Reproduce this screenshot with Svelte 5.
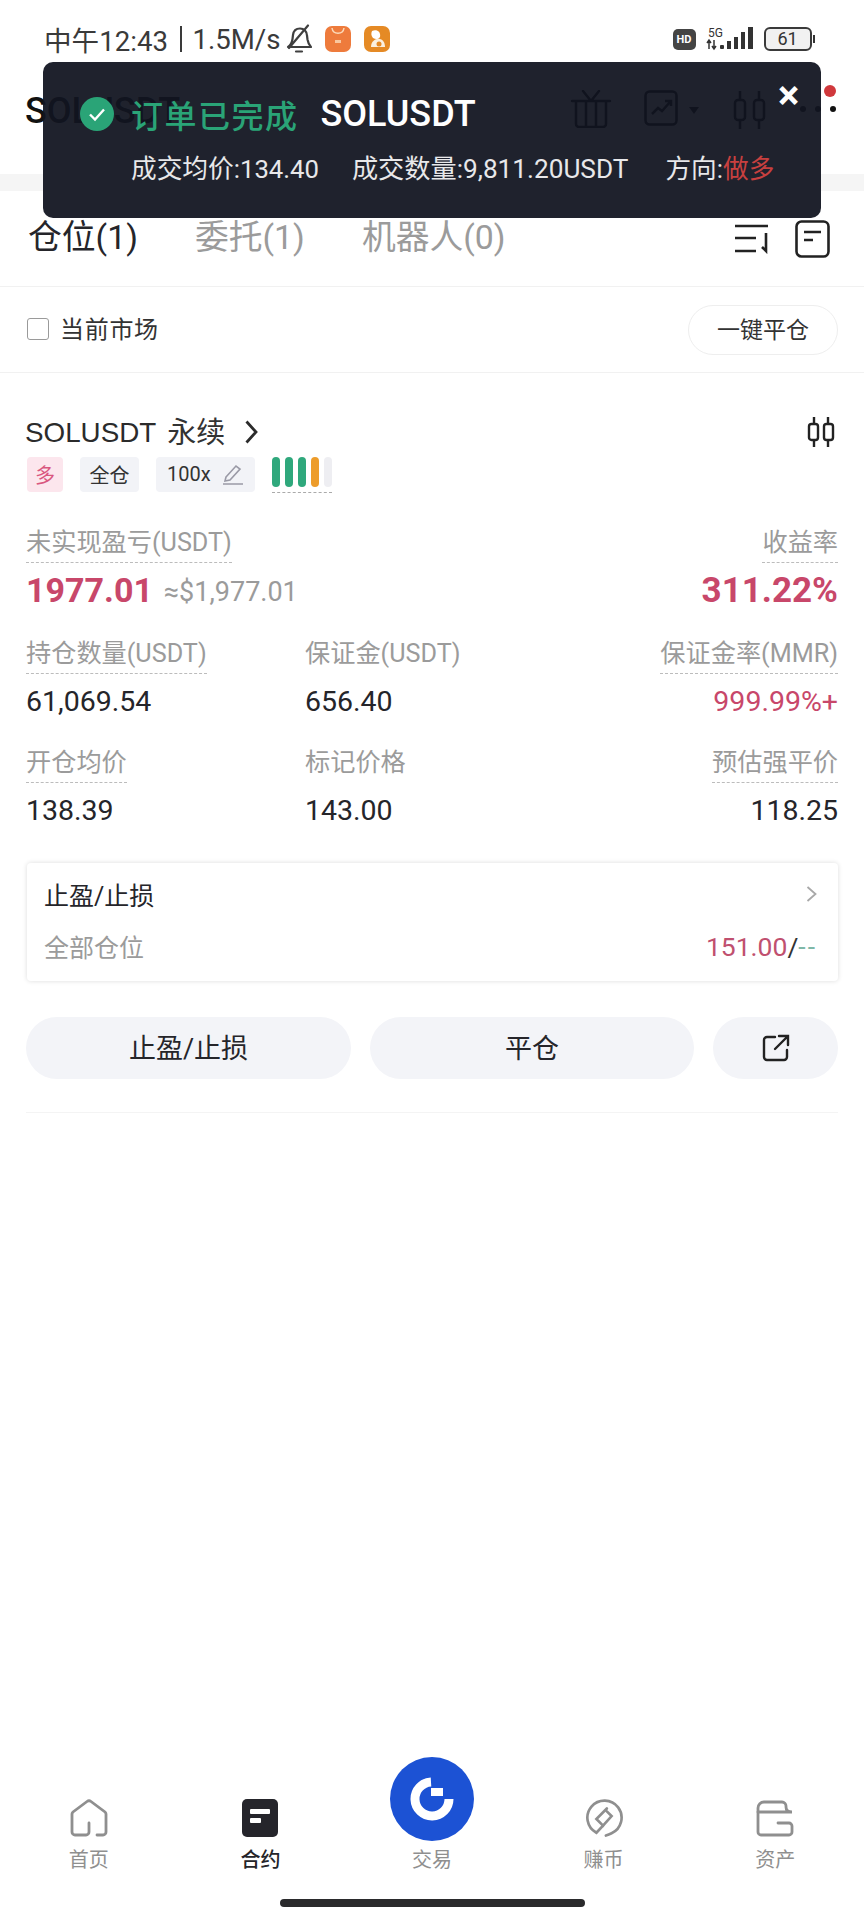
<script>
  const rows = [
    [
      { label: '持仓数量(USDT)', value: '61,069.54' },
      { label: '保证金(USDT)', value: '656.40', plain: true },
      { label: '保证金率(MMR)', value: '999.99%+', red: true }
    ],
    [
      { label: '开仓均价', value: '138.39' },
      { label: '标记价格', value: '143.00', plain: true },
      { label: '预估强平价', value: '118.25' }
    ]
  ];
  const bars = ['g', 'g', 'g', 'o', 'e'];
</script>

<div class="page">
  <div class="status">
    <span class="st-text">中午12:43</span>
    <span class="st-sep"></span>
    <span class="st-text">1.5M/s</span>
    <svg class="bell" viewBox="0 0 26 30" fill="none" stroke="#3f3f3f" stroke-width="2.200" stroke-linecap="round" stroke-linejoin="round">
      <path d="M2 23c3-2 4-4 4.500-8l.5-4c.5-4 3-6.500 7-6.500s7 3 7 7l.5 4c.5 3 1.500 5.500 3.500 7.500z" />
      <path d="M10 27.500h6M3 24L22 1.500" />
    </svg>
    <svg class="app" viewBox="0 0 26 26">
      <rect width="26" height="26" rx="7" fill="#ee7b3c" />
      <path d="M7 2c1 7 11 7 12 0" fill="none" stroke="#fbd9b8" stroke-width="1.500" />
      <rect x="10" y="14" width="6" height="3" fill="#f9c7a0" />
    </svg>
    <svg class="app" viewBox="0 0 26 26">
      <rect width="26" height="26" rx="7" fill="#e58a25" />
      <path d="M8 5c5-2 9 1 8 6-1 2-4 3-7 1-2-2-2-5-1-7z" fill="#fff" />
      <path d="M7 21c0-6 5-9 9-8s5 5 5 8z" fill="#fbf0df" />
      <circle cx="15" cy="18" r="2.500" fill="#e58a25" />
    </svg>
    <span class="st-right">
      <span class="hd">HD</span>
      <svg class="signal" viewBox="0 0 48 26">
        <text x="2" y="11" class="five">5G</text>
        <path d="M3 14v9M1 17l2-3 2 3M8 14v9M6 20l2 3 2-3" stroke="#333" stroke-width="1.500" fill="none" />
        <rect x="14" y="19" width="4" height="4" rx="1" fill="#333" />
        <rect x="21" y="15" width="4" height="8" fill="#333" />
        <rect x="28" y="11" width="4" height="12" fill="#333" />
        <rect x="35" y="6" width="4" height="17" fill="#333" />
        <rect x="42" y="1" width="5" height="22" fill="#333" />
      </svg>
      <span class="battery"><span class="batt-body">61</span><span class="batt-cap"></span></span>
    </span>
  </div>

  <header class="head">
    <span class="pair">SOLUSDT</span>
    <svg class="gift" viewBox="0 0 42 38" fill="none" stroke="#000" stroke-width="2.500" stroke-linecap="round">
      <path d="M2 11h38M6 11v23a3 3 0 0 0 3 3h24a3 3 0 0 0 3-3V11M16 11v26M26 11v26M13 1l8 10M29 1l-8 10" />
    </svg>
    <svg class="chart" viewBox="0 0 34 36" fill="none" stroke="#000" stroke-width="2.500">
      <rect x="1.500" y="1.500" width="31" height="33" rx="4" />
      <path d="M8 24l6-6 4 3 8-9M21 11h6v5" />
    </svg>
    <span class="caret"></span>
    <svg class="candles big" viewBox="0 0 33 38" fill="none" stroke="#000" stroke-width="2.500">
      <path d="M7 0v9M7 29v9M26 0v9M26 29v9" />
      <rect x="2" y="9" width="10" height="20" rx="3" />
      <rect x="21" y="9" width="10" height="20" rx="3" />
    </svg>
    <span class="more"><i></i><i></i><i></i></span>
    <span class="red-dot"></span>
  </header>
  <div class="band"></div>

  <nav class="tabs">
    <span class="tab on">仓位(1)</span>
    <span class="tab">委托(1)</span>
    <span class="tab">机器人(0)</span>
    <svg class="sort" viewBox="0 0 36 30" fill="none" stroke="#222" stroke-width="2.600">
      <path d="M0 2h33M0 14h21M0 27h21M31 9v18l-4-4" />
    </svg>
    <svg class="doc" viewBox="0 0 35 38" fill="none" stroke="#222" stroke-width="2.600">
      <rect x="1.500" y="1.500" width="32" height="35" rx="5" />
      <path d="M9 12h17M9 20h9" />
    </svg>
  </nav>

  <div class="filter">
    <span class="check"></span>
    <span class="filter-label">当前市场</span>
    <button class="close-all">一键平仓</button>
  </div>

  <section class="position">
    <div class="title">
      <span class="symbol">SOLUSDT</span>
      <span class="perp">永续</span>
      <svg class="chev" viewBox="0 0 13 24" fill="none" stroke="#2b2b2b" stroke-width="2.800">
        <path d="M1.500 1.500L11 12 1.500 22.500" />
      </svg>
      <svg class="candles" viewBox="0 0 28 30" fill="none" stroke="#222" stroke-width="2.400">
        <path d="M7 0v7M7 23v7M21 0v7M21 23v7" />
        <rect x="2" y="7" width="9" height="16" rx="2.500" />
        <rect x="17" y="7" width="9" height="16" rx="2.500" />
      </svg>
    </div>

    <div class="tags">
      <span class="tag long">多</span>
      <span class="tag">全仓</span>
      <span class="tag lev">100x
        <svg class="pen" viewBox="0 0 22 22" fill="none" stroke="#9a9aa6" stroke-width="1.600">
          <path d="M4 14L14 3l4 3-10 11-5 1zM1 21h20" />
        </svg>
      </span>
      <span class="bars">
        {#each bars as b}<i class={b}></i>{/each}
      </span>
    </div>

    <div class="pnl-labels">
      <span class="lbl">未实现盈亏(USDT)</span>
      <span class="lbl">收益率</span>
    </div>
    <div class="pnl-values">
      <span class="pnl first">1977.01</span>
      <span class="approx">≈$1,977.01</span>
      <span class="pnl rate">311.22%</span>
    </div>

    {#each rows as row}
      <div class="grid">
        {#each row as cell, i}
          <div class="cell" class:end={i === 2}>
            {#if cell.plain}
              <span class="lbl nodash">{cell.label}</span>
            {:else}
              <span class="lbl">{cell.label}</span>
            {/if}
            <span class="val" class:red={cell.red}>{cell.value}</span>
          </div>
        {/each}
      </div>
    {/each}

    <div class="tp">
      <div class="tp-top">
        <span>止盈/止损</span>
        <svg class="tp-chev" viewBox="0 0 11 16" fill="none" stroke="#a8a8a8" stroke-width="1.800">
          <path d="M1.500 1l8 7-8 7" />
        </svg>
      </div>
      <div class="tp-bottom">
        <span class="tp-all">全部仓位</span>
        <span class="tp-val"><em>151.00</em>/<b>--</b></span>
      </div>
    </div>

    <div class="actions">
      <button class="act">止盈/止损</button>
      <button class="act">平仓</button>
      <button class="act share" aria-label="分享">
        <svg viewBox="0 0 28 28" fill="none" stroke="#222" stroke-width="2.400" stroke-linecap="round">
          <path d="M13 3H5a3 3 0 0 0-3 3v17a3 3 0 0 0 3 3h17a3 3 0 0 0 3-3v-7M13 15L26 2M17 2h9v9" />
        </svg>
      </button>
    </div>
    <div class="faint"></div>
  </section>

  <footer class="nav">
    <div class="nav-item">
      <svg class="nav-icon" viewBox="0 0 38 38" fill="none" stroke="#8f8f8f" stroke-width="2.800" stroke-linecap="round">
        <path d="M27 36h6a3 3 0 0 0 3-3V15q0-1-1-2L21 2.500q-2-1.500-4 0L3 13q-1 1-1 2v18a3 3 0 0 0 3 3h11a3 3 0 0 0 3-3v-9" />
      </svg>
      <span>首页</span>
    </div>
    <div class="nav-item active">
      <svg class="nav-icon" viewBox="0 0 38 38">
        <rect x="1" width="36" height="38" rx="5" fill="#25252b" />
        <rect x="9" y="10" width="20" height="5" rx="1" fill="#fff" />
        <rect x="9" y="19" width="11" height="5" rx="1" fill="#fff" />
      </svg>
      <span>合约</span>
    </div>
    <div class="nav-item">
      <span class="trade">
        <svg viewBox="0 0 84 84">
          <circle cx="42" cy="42" r="42" fill="#1c52d4" />
          <path d="M41 25A17 17 0 1 0 59 42" fill="none" stroke="#fff" stroke-width="9" />
          <rect x="41" y="31" width="12" height="8" fill="#fff" />
        </svg>
      </span>
      <span>交易</span>
    </div>
    <div class="nav-item">
      <svg class="nav-icon" viewBox="0 0 40 38" fill="none" stroke="#8f8f8f" stroke-width="2.800" stroke-linecap="round">
        <path d="M22 37.500c1.500-.5 3-1 6-2.500A18 18 0 1 0 12 34.500L19 27" />
        <path d="M23 9L12 20l7 7 9-10-5-5" />
      </svg>
      <span>赚币</span>
    </div>
    <div class="nav-item">
      <svg class="nav-icon" viewBox="0 0 38 38" fill="none" stroke="#8f8f8f" stroke-width="2.800" stroke-linecap="round">
        <path d="M2 13v20a3 3 0 0 0 3 3h28a3 3 0 0 0 3-3v-6a3 3 0 0 0-3-3H22" />
        <path d="M2 13V9a6 6 0 0 1 6-6h18a4 4 0 0 1 4 4v1c0 3 2 5 6 5H2" />
      </svg>
      <span>资产</span>
    </div>
  </footer>
  <div class="home-wrap"><span class="home"></span></div>

  <aside class="toast">
    <div class="toast-head">
      <svg class="ok" viewBox="0 0 34 34">
        <circle cx="17" cy="17" r="17" fill="#2aa477" />
        <path d="M10 17.500l5 5 9-10" fill="none" stroke="#fff" stroke-width="2.400" />
      </svg>
      <span class="done">订单已完成</span>
      <span class="toast-sym">SOLUSDT</span>
    </div>
    <div class="toast-info">
      <span>成交均价:134.40</span>
      <span class="qty">成交数量:9,811.20USDT</span>
      <span class="dir">方向:<em>做多</em></span>
    </div>
    <span class="toast-x">×</span>
  </aside>
</div>

<style>
  :global(body) {
    margin: 0;
    background: #fff;
  }
  .page {
    position: relative;
    width: 864px;
    height: 1920px;
    display: flex;
    flex-direction: column;
    overflow: hidden;
    background: #fff;
    color: #25252a;
    font-family: Roboto, "Noto Sans CJK SC", sans-serif;
  }
  .status {
    height: 78px;
    flex: none;
    display: flex;
    align-items: center;
    padding: 0 49px 0 44px;
    box-sizing: border-box;
    color: #3a3a3a;
  }
  .st-text {
    font-size: 27.600px;
  }
  .st-sep {
    width: 2.500px;
    height: 26px;
    background: #3a3a3a;
    margin: 0 10px 0 12px;
  }
  .bell {
    width: 26px;
    height: 30px;
    margin-left: 6px;
  }
  .app {
    width: 26px;
    height: 26px;
    margin-left: 13px;
  }
  .st-right {
    margin-left: auto;
    display: flex;
    align-items: center;
    gap: 10px;
  }
  .hd {
    width: 23px;
    height: 21px;
    border-radius: 5px;
    background: #444;
    color: #fff;
    font-size: 11px;
    font-weight: 700;
    display: flex;
    align-items: center;
    justify-content: center;
  }
  .signal {
    width: 48px;
    height: 26px;
    overflow: visible;
  }
  .five {
    font-size: 12px;
    fill: #333;
  }
  .battery {
    display: flex;
    align-items: center;
  }
  .batt-body {
    width: 44px;
    height: 20px;
    border: 2px solid #3a3a3a;
    border-radius: 6px;
    font-size: 18px;
    line-height: 20px;
    text-align: center;
    background: #f1f1f1;
    color: #333;
  }
  .batt-cap {
    width: 2.500px;
    height: 8px;
    margin-left: 1px;
    background: #333;
  }
  .head {
    position: relative;
    height: 96px;
    flex: none;
    display: flex;
    align-items: center;
    padding-left: 25px;
    box-sizing: border-box;
    padding-bottom: 30px;
  }
  .pair {
    font-size: 36px;
    font-weight: 500;
    color: #111;
  }
  .gift {
    position: absolute;
    left: 570px;
    top: 12px;
    width: 42px;
    height: 38px;
  }
  .chart {
    position: absolute;
    left: 644px;
    top: 12px;
    width: 34px;
    height: 36px;
  }
  .caret {
    position: absolute;
    left: 689px;
    top: 29px;
    border: 5px solid transparent;
    border-top: 7px solid #000;
  }
  .candles.big {
    position: absolute;
    left: 733px;
    top: 13px;
    width: 33px;
    height: 38px;
    margin: 0;
  }
  .more {
    position: absolute;
    left: 800px;
    top: 28px;
    display: flex;
    gap: 9px;
  }
  .more i {
    width: 6px;
    height: 6px;
    border-radius: 50%;
    background: #111;
  }
  .red-dot {
    position: absolute;
    left: 824px;
    top: 7px;
    width: 12px;
    height: 12px;
    border-radius: 50%;
    background: #d0383c;
  }
  .band {
    height: 17px;
    flex: none;
    background: #f5f5f5;
  }
  .tabs {
    height: 96px;
    flex: none;
    display: flex;
    align-items: center;
    padding: 0 34px 0 28px;
    box-sizing: border-box;
    border-bottom: 1px solid #f1f1f1;
  }
  .tab {
    font-size: 33.800px;
    color: #9b9b9b;
    margin-right: 57px;
    margin-bottom: 9px;
  }
  .tab.on {
    color: #25252a;
  }
  .sort {
    width: 36px;
    height: 30px;
    margin-left: auto;
    margin-right: 24px;
  }
  .doc {
    width: 35px;
    height: 38px;
  }
  .filter {
    height: 86px;
    flex: none;
    display: flex;
    align-items: center;
    padding: 0 26px 0 27px;
    box-sizing: border-box;
    border-bottom: 1px solid #f1f1f1;
  }
  .check {
    width: 20px;
    height: 20px;
    margin-top: -2px;
    border: 1.500px solid #9a9a9a;
    border-radius: 3px;
  }
  .filter-label {
    font-size: 24px;
    margin-left: 11px;
    margin-top: -4px;
    color: #333;
    letter-spacing: 0.7px;
  }
  .close-all {
    margin-left: auto;
    width: 150px;
    height: 50px;
    border: 1.500px solid #eeeeee;
    border-radius: 25px;
    background: #fff;
    font: inherit;
    font-size: 23px;
    color: #333;
    padding: 0 0 4px;
  }
  .position {
    padding: 0 26px;
    flex: none;
  }
  .title {
    display: flex;
    align-items: center;
    height: 36px;
    margin-top: 42px;
    font-size: 28px;
  }
  .symbol {
    font-family: "Liberation Sans", sans-serif;
    font-size: 27.800px;
    color: #2b2b2b;
    margin-left: -1px;
  }
  .perp {
    margin-left: 11px;
    margin-top: -6px;
    font-size: 29px;
    color: #333;
  }
  .chev {
    width: 13px;
    height: 24px;
    margin-left: 20px;
    margin-top: -2px;
  }
  .candles {
    width: 28px;
    height: 30px;
    margin-left: auto;
    margin-right: 3px;
    margin-top: -3px;
  }
  .tags {
    display: flex;
    align-items: center;
    margin-top: 5px;
    height: 36px;
  }
  .tag {
    display: flex;
    align-items: center;
    height: 35px;
    padding: 0 9.500px;
    margin-right: 17px;
    border-radius: 4px;
    background: #f2f3f7;
    font-size: 20px;
    color: #333;
  }
  .tag.long {
    background: #fce6ed;
    color: #d9577f;
    margin-left: 1px;
    margin-right: 17px;
    padding: 0 8px;
  }
  .tag.lev {
    gap: 11px;
    padding: 0 11px;
  }
  .pen {
    width: 22px;
    height: 22px;
  }
  .bars {
    display: flex;
    gap: 5px;
    height: 30px;
    padding-bottom: 5px;
    margin-top: 1px;
    border-bottom: 1.500px dashed #aaa;
  }
  .bars i {
    width: 8px;
    border-radius: 4px;
  }
  .bars .g {
    background: #2fa87c;
  }
  .bars .o {
    background: #ed9c2a;
  }
  .bars .e {
    background: #eeeef2;
  }
  .pnl-labels {
    display: flex;
    justify-content: space-between;
    margin-top: 34px;
  }
  .lbl {
    font-size: 25.200px;
    line-height: 34px;
    color: #9b9b9b;
    padding-bottom: 2px;
    border-bottom: 1.500px dashed #bcbcbc;
  }
  .lbl.nodash {
    border-bottom-color: transparent;
  }
  .pnl-values {
    display: flex;
    align-items: center;
    margin-top: 7px;
    height: 40px;
  }
  .pnl {
    font-size: 35px;
    font-weight: 700;
    color: #c8476a;
  }
  .pnl.first {
    font-size: 34px;
  }
  .approx {
    font-size: 27px;
    color: #9b9b9b;
    margin-left: 11px;
    padding-top: 3px;
  }
  .rate {
    margin-left: auto;
  }
  .grid {
    display: grid;
    grid-template-columns: 279px 1fr auto;
    margin-top: 26px;
  }
  .pnl-values + .grid {
    margin-top: 27px;
  }
  .cell {
    display: flex;
    flex-direction: column;
    align-items: flex-start;
  }
  .cell.end {
    align-items: flex-end;
  }
  .val {
    font-size: 28.500px;
    line-height: 36px;
    margin-top: 10px;
    color: #25252a;
  }
  .val.red {
    color: #c8476a;
  }
  .tp {
    margin-top: 34px;
    margin-left: 1px;
    height: 118px;
    padding: 0 21px 0 17px;
    box-sizing: border-box;
    border-radius: 4px;
    background: #fff;
    box-shadow: 0 0 5px rgba(0, 0, 0, 0.14);
    display: flex;
    flex-direction: column;
  }
  .tp-top,
  .tp-bottom {
    display: flex;
    align-items: center;
    justify-content: space-between;
    font-size: 25px;
  }
  .tp-top {
    margin-top: 13px;
    height: 36px;
  }
  .tp-chev {
    width: 11px;
    height: 16px;
  }
  .tp-bottom {
    margin-top: 16px;
    height: 36px;
  }
  .tp-all {
    color: #9b9b9b;
  }
  .tp-val {
    font-size: 26.500px;
    color: #333;
  }
  .tp-val em {
    font-style: normal;
    color: #c0506f;
  }
  .tp-val b {
    font-weight: 400;
    color: #7fb8a8;
    letter-spacing: 2px;
  }
  .actions {
    display: grid;
    grid-template-columns: 325px 324px 125px;
    gap: 19px;
    margin-top: 36px;
  }
  .act {
    height: 62px;
    border: 0;
    border-radius: 31px;
    background: #f3f4f8;
    font: inherit;
    font-size: 27px;
    color: #25252a;
    padding: 0 0 4px;
    display: flex;
    align-items: center;
    justify-content: center;
  }
  .act.share {
    padding: 0;
  }
  .share svg {
    width: 28px;
    height: 28px;
  }
  .faint {
    height: 1px;
    margin-top: 33px;
    background: #f4f4f4;
  }
  .nav {
    margin-top: auto;
    margin-left: 3px;
    width: 858px;
    height: 114px;
    flex: none;
    display: grid;
    grid-template-columns: repeat(5, 1fr);
    box-sizing: border-box;
    position: relative;
  }
  .nav-item {
    display: flex;
    flex-direction: column;
    align-items: center;
    justify-content: flex-end;
    font-size: 20px;
    color: #8f8f8f;
    position: relative;
  }
  .nav-item.active {
    color: #25252a;
    font-weight: 500;
  }
  .nav-icon {
    width: 38px;
    height: 38px;
    margin-bottom: 7px;
  }
  .trade {
    position: absolute;
    left: 50%;
    top: -2px;
    width: 84px;
    height: 84px;
    margin-left: -42px;
  }
  .trade svg {
    width: 84px;
    height: 84px;
    display: block;
  }
  .home-wrap {
    height: 47px;
    flex: none;
    display: flex;
    justify-content: center;
    align-items: flex-start;
    padding-top: 26px;
    box-sizing: border-box;
  }
  .home {
    width: 305px;
    height: 8px;
    border-radius: 4px;
    background: #2a2a2c;
  }
  .toast {
    position: absolute;
    left: 43px;
    top: 62px;
    width: 778px;
    height: 156px;
    box-sizing: border-box;
    border-radius: 10px;
    background: rgba(17, 20, 32, 0.94);
    color: #fff;
    padding: 33px 0 0 37px;
  }
  .toast-head {
    display: flex;
    align-items: center;
    height: 38px;
  }
  .ok {
    width: 34px;
    height: 34px;
  }
  .done {
    font-size: 32px;
    font-weight: 500;
    color: #2aa477;
    margin-left: 17px;
    letter-spacing: 1.500px;
  }
  .toast-sym {
    font-size: 36px;
    font-weight: 500;
    margin-left: 22px;
  }
  .toast-info {
    display: flex;
    margin-top: 15px;
    margin-left: 51px;
    font-size: 25.700px;
    color: #e8e8ea;
  }
  .qty {
    font-size: 26.200px;
    margin-left: 33px;
  }
  .dir {
    margin-left: 37px;
  }
  .toast-info em {
    font-style: normal;
    color: #c8403f;
  }
  .toast-x {
    position: absolute;
    left: 735px;
    top: 14px;
    font-size: 40px;
    line-height: 40px;
    font-weight: 700;
    color: #fff;
  }
</style>
